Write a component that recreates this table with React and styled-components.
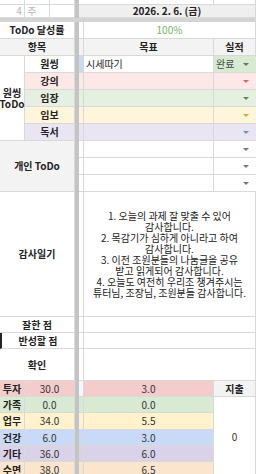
import React from 'react'
import styled, { createGlobalStyle } from 'styled-components'

const Global = createGlobalStyle`
  html, body { margin: 0; padding: 0; background: #fff; overflow: hidden; }
`

const line = '#d9d9d9'

const todos = [
  { label: '원씽', bg: '#fff', goal: '시세따기', result: '완료', resBg: '#d9ead3', arrow: '#5b7a55', narrow: '#c6dcf2' },
  { label: '강의', bg: '#fce8e6', arrow: '#e06666' },
  { label: '임장', bg: '#e6f0e0', arrow: '#5d8a4e' },
  { label: '임보', bg: '#fef5da', arrow: '#e1a534' },
  { label: '독서', bg: '#e9e5f3', arrow: '#6f8fd0' },
]

const stats = [
  { label: '투자', bg: '#f4cccc', total: '30.0', day: '3.0' },
  { label: '가족', bg: '#d9ead3', total: '0.0', day: '0.0' },
  { label: '업무', bg: '#fff2cc', total: '34.0', day: '5.5' },
  { label: '건강', bg: '#c9daf8', total: '6.0', day: '3.0' },
  { label: '기타', bg: '#d9d2e9', total: '36.0', day: '6.0' },
  { label: '수면', bg: '#fce5cd', total: '38.0', day: '6.5' },
]

const thanks = [
  '1. 오늘의 과제 잘 맞출 수 있어',
  '감사합니다.',
  '2. 목감기가 심하게 아니라고 하여',
  '감사합니다.',
  '3. 이전 조원분들의 나눔글을 공유',
  '받고 읽게되어 감사합니다.',
  '4. 오늘도 여전히 우리조 챙겨주시는',
  '튜터님, 조장님, 조원분들 감사합니다.',
]

function App() {
  return (
    <>
      <Global />
      <Sheet>
        {/* cut-off row on top */}
        <Cell $col="1" $row="1" />
        <Cell $col="2" $row="1" />
        <Cell $col="3" $row="1" />
        <Cell $col="5 / 7" $row="1" />
        <Cell $col="7" $row="1" />

        <Cell $col="1" $row="2" $align="flex-end" $muted>4&nbsp;</Cell>
        <Cell $col="2" $row="2" $align="flex-start" $muted>&nbsp;주</Cell>
        <Cell $col="3" $row="2" />
        <Cell $col="5 / 8" $row="2" $bg="#efefef" $bold>2026. 2. 6. (금)</Cell>

        <Cell $col="1 / 4" $row="4" $bold>ToDo 달성률</Cell>
        <Cell $col="5" $row="4" />
        <Cell $col="6 / 8" $row="4" $color="#78b35e">100%</Cell>

        <Cell $col="1 / 4" $row="5" $bg="#f3f3f3" $bold>항목</Cell>
        <Cell $col="5" $row="5" $bg="#f3f3f3" />
        <Cell $col="6" $row="5" $bg="#f3f3f3" $bold>목표</Cell>
        <Cell $col="7" $row="5" $bg="#f3f3f3" $bold>실적</Cell>

        <Cell $col="1" $row="6 / 11" $bold $wrap>원씽<br />ToDo</Cell>
        {todos.map((t, i) => (
          <React.Fragment key={t.label}>
            <Cell $col="2 / 4" $row={String(6 + i)} $bg={t.bg} $bold>{t.label}</Cell>
            <Cell $col="5" $row={String(6 + i)} $bg={t.narrow || t.bg} />
            <Cell $col="6" $row={String(6 + i)} $bg={t.goal ? '#fff' : t.bg} $align="flex-start">
              {t.goal && <Pad>{t.goal}</Pad>}
            </Cell>
            <Result $row={String(6 + i)} $bg={t.resBg || t.bg}>
              <span>{t.result}</span>
              <Arrow $color={t.arrow} />
            </Result>
          </React.Fragment>
        ))}

        <Cell $col="1 / 4" $row="11 / 14" $bg="#f3f3f3" $bold>개인 ToDo</Cell>
        {[11, 12, 13].map((r) => (
          <React.Fragment key={r}>
            <Cell $col="5" $row={String(r)} />
            <Cell $col="6" $row={String(r)} />
            <Result $row={String(r)} $bg="#fff">
              <span />
              <Arrow $color="#777" />
            </Result>
          </React.Fragment>
        ))}

        <Cell $col="1 / 4" $row="14" $bold>감사일기</Cell>
        <Cell $col="5" $row="14" />
        <Cell $col="6 / 8" $row="14">
          <Diary>
            {thanks.map((l, i) => <div key={i}>{l}</div>)}
          </Diary>
        </Cell>

        <Cell $col="1 / 4" $row="15" $bold>잘한 점</Cell>
        <Cell $col="5" $row="15" />
        <Cell $col="6 / 8" $row="15" />

        <Cell $col="1 / 4" $row="16" $bold $mark>반성할 점</Cell>
        <Cell $col="5" $row="16" />
        <Cell $col="6 / 8" $row="16" />

        <Cell $col="1 / 4" $row="17" $bold>확인</Cell>
        <Cell $col="5" $row="17" />
        <Cell $col="6 / 8" $row="17" />

        {stats.map((s, i) => (
          <React.Fragment key={s.label}>
            <Cell $col="1" $row={String(18 + i)} $bg={s.bg} $bold>{s.label}</Cell>
            <Cell $col="2 / 4" $row={String(18 + i)} $bg={s.bg} $color="#333">{s.total}</Cell>
            <Cell $col="5" $row={String(18 + i)} $bg={i === 0 ? '#f7f7f7' : s.bg} />
            <Cell $col="6" $row={String(18 + i)} $bg={s.bg} $color="#333">{s.day}</Cell>
          </React.Fragment>
        ))}
        <Cell $col="7" $row="18" $bg="#f3f3f3" $bold>지출</Cell>
        <Cell $col="7" $row="19 / 24" $color="#333">0</Cell>

        <FreezeCol />
        <FreezeRow />
      </Sheet>
    </>
  )
}

export default App

const Sheet = styled.div`
  display: grid;
  grid-template-columns: 25px 25px 25px 4px 5px 130px 42px;
  grid-template-rows: 5px 13px 4px repeat(10, 17px) 125px 16px 16px 32px 16px 16px 17px 16px 16px 16px;
  width: 256px;
  font-family: "Noto Sans CJK KR", "Noto Sans", sans-serif;
  font-size: 10px;
  color: #222;
`

const Cell = styled.div`
  grid-column: ${(p) => p.$col};
  grid-row: ${(p) => p.$row};
  box-sizing: border-box;
  background: ${(p) => p.$bg || '#fff'};
  border-right: 1px solid ${line};
  border-bottom: 1px solid ${line};
  border-left: ${(p) => (p.$mark ? '2px solid #222' : 'none')};
  display: flex;
  align-items: center;
  justify-content: ${(p) => p.$align || 'center'};
  text-align: center;
  font-weight: ${(p) => (p.$bold ? 700 : 400)};
  color: ${(p) => (p.$muted ? '#b7b7b7' : p.$color || '#222')};
  line-height: ${(p) => (p.$wrap ? '11px' : '12px')};
  white-space: nowrap;
  overflow: visible;
  min-width: 0;
`

const Pad = styled.span`
  padding-left: 2px;
`

const Result = styled.div`
  grid-column: 7;
  grid-row: ${(p) => p.$row};
  box-sizing: border-box;
  background: ${(p) => p.$bg};
  border-bottom: 1px solid ${line};
  display: flex;
  align-items: center;
  justify-content: space-between;
  padding: 0 7px 0 2px;
  color: #3d4a3d;
  line-height: 12px;
`

const Arrow = styled.span`
  width: 0;
  height: 0;
  border-left: 3px solid transparent;
  border-right: 3px solid transparent;
  border-top: 3px solid ${(p) => p.$color};
`

const Diary = styled.div`
  line-height: 11px;
  text-align: center;
  color: #222;
`

const FreezeCol = styled.div`
  grid-column: 4;
  grid-row: 1 / -1;
  background: #c4c4c4;
`

const FreezeRow = styled.div`
  grid-column: 1 / -1;
  grid-row: 3;
  background: #d4d4d4;
`
